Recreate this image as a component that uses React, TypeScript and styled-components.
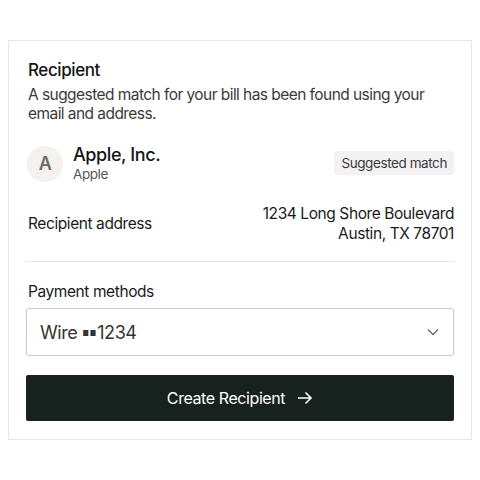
import React from "react";
import styled, { createGlobalStyle } from "styled-components";

const Global = createGlobalStyle`
  html, body { margin: 0; padding: 0; background: #ffffff; }
  body { font-family: Inter, "Liberation Sans", sans-serif; color: #1a1a1a; letter-spacing: -0.026em; -webkit-font-smoothing: antialiased; }
  * { box-sizing: border-box; }
`;

const Page = styled.div`
  padding: 40px 8px;
`;

const Card = styled.section`
  border: 1px solid #e6e6e8;
  background: #fff;
  padding: 18px 17px 18px;
  display: flex;
  flex-direction: column;
`;

const Title = styled.h2`
  margin: 0;
  padding-left: 2px;
  font-size: 17px;
  line-height: 22px;
  font-weight: 500;
  color: #141414;
`;

const Description = styled.p`
  margin: 4px 0 0;
  padding-left: 2px;
  font-size: 15.5px;
  line-height: 19px;
  letter-spacing: -0.036em;
  color: #3a3a3a;
`;

const MatchRow = styled.div`
  display: flex;
  align-items: center;
  gap: 10px;
  margin-top: 21px;
`;

const Avatar = styled.div`
  width: 36px;
  height: 36px;
  border-radius: 50%;
  background: #f4f1ee;
  color: #6e6a67;
  font-weight: 600;
  font-size: 18px;
  display: flex;
  align-items: center;
  justify-content: center;
  flex-shrink: 0;
  margin-left: 1px;
`;

const NameBlock = styled.div`
  display: flex;
  flex-direction: column;
  flex: 1;
`;

const Name = styled.div`
  font-size: 18px;
  line-height: 22px;
  font-weight: 500;
  color: #141414;
`;

const SubName = styled.div`
  font-size: 13.5px;
  line-height: 17px;
  color: #555;
`;

const Badge = styled.span`
  background: #f3f1f4;
  color: #3a3a3a;
  font-size: 13.5px;
  line-height: 24px;
  padding: 0 7px;
  border-radius: 4px;
  align-self: flex-start;
  margin-top: 7px;
`;

const AddressRow = styled.div`
  display: flex;
  justify-content: space-between;
  align-items: center;
  margin-top: 21px;
  padding-bottom: 17px;
  border-bottom: 1px solid #e8e8e8;
`;

const Label = styled.div`
  padding-left: 2px;
  font-size: 15.5px;
  line-height: 20px;
  color: #1a1a1a;
`;

const Address = styled.div`
  text-align: right;
  font-size: 15.5px;
  line-height: 20px;
  color: #1a1a1a;
`;

const FieldLabel = styled(Label)`
  margin-top: 20px;
`;

const Select = styled.div`
  margin-top: 6px;
  height: 48px;
  border: 1px solid #c9c9c9;
  border-radius: 3px;
  display: flex;
  align-items: center;
  justify-content: space-between;
  padding: 0 14px 0 13px;
  font-size: 18px;
  color: #333;
`;

const Mask = styled.span`
  font-size: 7px;
  letter-spacing: 1px;
  margin: 0 0 0 5px;
  vertical-align: 3px;
`;

const Button = styled.button`
  margin-top: 19px;
  height: 46px;
  border: none;
  border-radius: 2px;
  background: #17221f;
  color: #fff;
  font-family: inherit;
  letter-spacing: inherit;
  font-size: 16px;
  display: flex;
  align-items: center;
  justify-content: center;
  gap: 12px;
  cursor: pointer;
`;

export default function App() {
  return (
    <Page>
      <Global />
      <Card>
        <Title>Recipient</Title>
        <Description>
          A suggested match for your bill has been found using your email and address.
        </Description>
        <MatchRow>
          <Avatar>A</Avatar>
          <NameBlock>
            <Name>Apple, Inc.</Name>
            <SubName>Apple</SubName>
          </NameBlock>
          <Badge>Suggested match</Badge>
        </MatchRow>
        <AddressRow>
          <Label>Recipient address</Label>
          <Address>
            1234 Long Shore Boulevard
            <br />
            Austin, TX 78701
          </Address>
        </AddressRow>
        <FieldLabel>Payment methods</FieldLabel>
        <Select>
          <span>
            Wire<Mask>■■</Mask>1234
          </span>
          <svg width="12" height="8" viewBox="0 0 12 8" fill="none">
            <path d="M1 1.5l5 5 5-5" stroke="#666" strokeWidth="1.3" />
          </svg>
        </Select>
        <Button>
          Create Recipient
          <svg width="16" height="14" viewBox="0 0 16 14" fill="none">
            <path d="M1 7h13M8.5 1.5L14 7l-5.5 5.5" stroke="#fff" strokeWidth="1.6" />
          </svg>
        </Button>
      </Card>
    </Page>
  );
}
